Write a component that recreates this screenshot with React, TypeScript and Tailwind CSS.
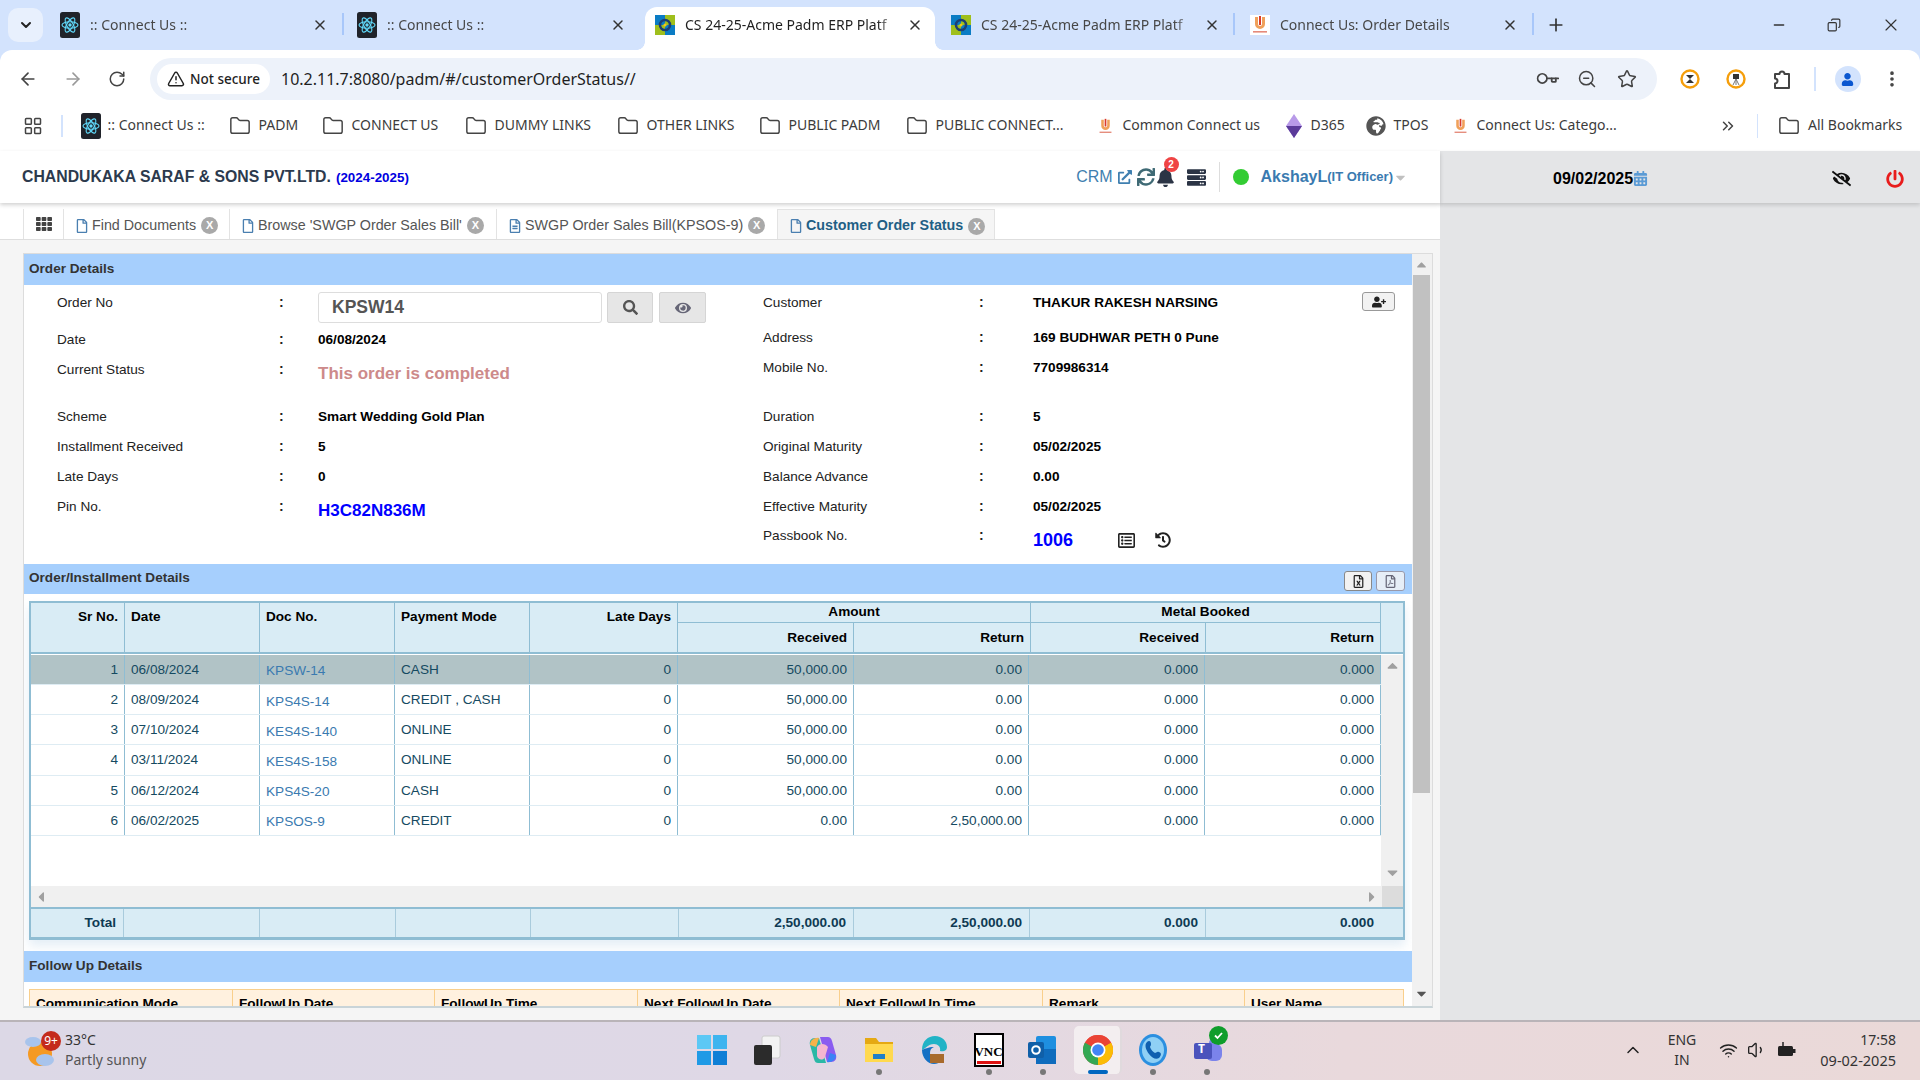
import React from "react";
import { ArrowLeft, ArrowRight, RotateCw, TriangleAlert, ZoomOut, Star, EllipsisVertical, Minus, Copy, X, Plus, ChevronDown, Folder, LayoutGrid, ChevronsRight, Key, ChevronUp, Wifi, Volume1 } from "lucide-react";
import { FaSearch, FaEye, FaUserPlus, FaHistory, FaRegFileExcel, FaRegFilePdf, FaExternalLinkAlt, FaSync, FaBell, FaServer, FaCalendarAlt, FaEyeSlash, FaPowerOff, FaTh, FaRegFile, FaRegFileAlt, FaCaretDown, FaRegListAlt, FaUser, FaGlobeAfrica } from "react-icons/fa";

function ReactIcon({ size = 20 }: { size?: number }) {
  return (
    <svg width={size} height={size * 1.3} viewBox="0 0 20 26" className="shrink-0">
      <rect width="20" height="26" rx="2.5" fill="#20232a" />
      <g fill="none" stroke="#61dafb" strokeWidth="1.1">
        <ellipse cx="10" cy="13" rx="8" ry="3.2" />
        <ellipse cx="10" cy="13" rx="8" ry="3.2" transform="rotate(60 10 13)" />
        <ellipse cx="10" cy="13" rx="8" ry="3.2" transform="rotate(120 10 13)" />
      </g>
      <circle cx="10" cy="13" r="1.7" fill="#61dafb" />
    </svg>
  );
}
function AcmeIcon() {
  return (
    <svg width="20" height="20" viewBox="0 0 20 20" className="shrink-0">
      <rect width="10" height="10" fill="#0a7cc4" />
      <rect x="10" width="10" height="10" fill="#9fbf1c" />
      <rect y="10" width="10" height="10" fill="#9fbf1c" />
      <rect x="10" y="10" width="10" height="10" fill="#0a7cc4" />
      <circle cx="10" cy="10" r="5" fill="none" stroke="#1d3f73" strokeWidth="2.6" />
      <circle cx="10" cy="10" r="1.6" fill="#f5c518" />
    </svg>
  );
}
function CuIcon({ size = 20 }: { size?: number }) {
  return (
    <svg width={size} height={size} viewBox="0 0 20 20" className="shrink-0">
      <rect width="20" height="20" fill="#fff" />
      <path d="M5 2v7a5 5 0 0 0 10 0V2h-3v7a2 2 0 0 1-4 0V2z" fill="#f0a05a" />
      <path d="M9 1h2v9H9z" fill="#d93a2b" />
      <rect x="3" y="16" width="14" height="1.6" fill="#e58a7a" />
    </svg>
  );
}

function ChromeTab({ box, icon, text, active, sep }: { box: string; icon: React.ReactNode; text: string; active?: boolean; sep?: boolean }) {
  return (
    <div className={`relative flex items-center h-[43px] pb-[7px] shrink-0 ${box} ${active ? "bg-white rounded-t-[12px] text-[#1f1f1f]" : "text-[#474747]"}`}>
      {active && (
        <>
          <span className="absolute bottom-0 left-[-8px] w-[8px] h-[8px] bg-[radial-gradient(circle_at_0_0,transparent_7.5px,white_8px)]" />
          <span className="absolute bottom-0 right-[-8px] w-[8px] h-[8px] bg-[radial-gradient(circle_at_100%_0,transparent_7.5px,white_8px)]" />
        </>
      )}
      {icon}
      <span className="flex-1 ml-[10px] mr-[8px] whitespace-nowrap overflow-hidden text-[14px] leading-[20px] [mask-image:linear-gradient(90deg,black_90%,transparent)]">{text}</span>
      <X size={16} strokeWidth={2.2} className="shrink-0 text-[#333]" />
      {sep && <span className="absolute right-0 top-[6px] h-[22px] w-[2px] bg-[#a8c7fa]" />}
    </div>
  );
}

function Bm({ box, icon, text, gap }: { box: string; icon?: React.ReactNode; text: string; gap: string }) {
  return (
    <div className={`flex items-center shrink-0 ${box}`}>
      {icon ?? <Folder size={22} strokeWidth={1.6} className="text-[#444] shrink-0" />}
      <span className={`${gap} whitespace-nowrap text-[14px] leading-[20px] text-[#3c3c3c] pb-[2px]`}>{text}</span>
    </div>
  );
}

function ChromeBar() {
  return (
    <div className="bg-[#d3e3fd] font-['Noto_Sans',sans-serif]">
      <div className="flex items-end h-[50px] pl-[8px]">
        <div className="flex items-center justify-center w-[35px] h-[34px] mb-[8px] mr-[7px] rounded-[10px] bg-[#e8f0fd] shrink-0">
          <ChevronDown size={16} strokeWidth={3} className="text-[#222]" />
        </div>
        <ChromeTab box="w-[294px] pl-[10px] pr-[16px]" icon={<ReactIcon size={20} />} text=":: Connect Us ::" sep />
        <ChromeTab box="w-[296px] pl-[13px] pr-[14px]" icon={<ReactIcon size={20} />} text=":: Connect Us ::" />
        <ChromeTab box="w-[290px] ml-[5px] pl-[10px] pr-[12px]" icon={<AcmeIcon />} text="CS 24-25-Acme Padm ERP Platf" active />
        <ChromeTab box="w-[295px] ml-[5px] pl-[11px] pr-[15px]" icon={<AcmeIcon />} text="CS 24-25-Acme Padm ERP Platf" sep />
        <ChromeTab box="w-[299px] pl-[15px] pr-[16px]" icon={<CuIcon />} text="Connect Us: Order Details" sep />
        <div className="flex items-center justify-center w-[44px] h-[43px] pb-[7px] shrink-0">
          <Plus size={20} strokeWidth={2} className="text-[#333]" />
        </div>
        <div className="flex-1" />
        <div className="flex items-center justify-center w-[55px] h-[50px] shrink-0"><Minus size={16} className="text-[#333]" /></div>
        <div className="flex items-center justify-center w-[56px] h-[50px] shrink-0"><Copy size={14} className="text-[#333] -scale-x-100" /></div>
        <div className="flex items-center justify-center w-[58px] h-[50px] shrink-0"><X size={20} strokeWidth={1.4} className="text-[#333]" /></div>
      </div>
      <div className="bg-white rounded-t-[12px]">
        <div className="flex items-start h-[58px] pt-[8px]">
          <div className="flex items-center h-[42px] w-[150px] shrink-0 pl-[18px] gap-[25px]">
            <ArrowLeft size={20} className="text-[#444] shrink-0" />
            <ArrowRight size={20} className="text-[#9a9a9a] shrink-0" />
            <RotateCw size={18} className="text-[#444] shrink-0" />
          </div>
          <div className="flex items-center w-[1507px] h-[42px] rounded-full bg-[#edf2fa] pl-[7px] pr-[20px] shrink-0">
            <div className="flex items-center justify-center gap-[5px] w-[113px] h-[30px] rounded-full bg-white shrink-0">
              <TriangleAlert size={18} className="text-[#222]" />
              <span className="text-[13.5px] font-medium text-[#1f1f1f] whitespace-nowrap">Not secure</span>
            </div>
            <span className="ml-[11px] text-[16px] text-[#1f1f1f] whitespace-nowrap flex-1">10.2.11.7:8080/padm/#/customerOrderStatus//</span>
            <Key size={20} strokeWidth={2.2} className="text-[#444] rotate-45 shrink-0" />
            <ZoomOut size={20} strokeWidth={1.8} className="text-[#444] ml-[20px] shrink-0" />
            <Star size={20} strokeWidth={1.8} className="text-[#444] ml-[20px] shrink-0" />
          </div>
          <div className="flex items-center h-[42px] pl-[23px]">
            <svg width="20" height="20" viewBox="0 0 20 20" className="shrink-0"><circle cx="10" cy="10" r="8.5" fill="#fff" stroke="#f59e0b" strokeWidth="2.4" /><path d="M6 6h8L6 14h8z" fill="#333" /></svg>
            <svg width="20" height="20" viewBox="0 0 20 20" className="ml-[26px] shrink-0"><circle cx="10" cy="10" r="8.5" fill="#fff" stroke="#f59e0b" strokeWidth="2.4" /><rect x="7" y="5" width="6" height="5" fill="#333" /><path d="M10 10v6M10 10l-3 6M10 10l3 6" stroke="#777" /></svg>
            <svg width="22" height="22" viewBox="0 0 22 22" className="ml-[25px] shrink-0"><path d="M4 6h4.5a2.5 2.5 0 0 1 5 0H18v14H4v-4.5a2.5 2.5 0 0 0 0-5z" fill="none" stroke="#444" strokeWidth="2" strokeLinejoin="round" /></svg>
            <span className="ml-[21px] w-[1.5px] h-[24px] bg-[#d3e3fd] shrink-0" />
            <div className="ml-[19px] flex items-center justify-center w-[26px] h-[26px] rounded-full bg-[#d3e3fd] shrink-0">
              <FaUser size={13} className="text-[#0b57d0]" />
            </div>
            <EllipsisVertical size={20} strokeWidth={2.4} className="ml-[21px] text-[#444] shrink-0" />
          </div>
        </div>
        <div className="flex items-center h-[36px] pl-[23px]">
          <LayoutGrid size={20} strokeWidth={1.8} className="text-[#444] shrink-0" />
          <span className="ml-[18px] mr-[18px] w-[1.5px] h-[22px] bg-[#d3e3fd] shrink-0" />
          <Bm box="w-[148px]" icon={<ReactIcon size={20} />} text=":: Connect Us ::" gap="ml-[7px]" />
          <Bm box="w-[93px]" text="PADM" gap="ml-[8px]" />
          <Bm box="w-[143px]" text="CONNECT US" gap="ml-[8px]" />
          <Bm box="w-[152px]" text="DUMMY LINKS" gap="ml-[8px]" />
          <Bm box="w-[142px]" text="OTHER LINKS" gap="ml-[8px]" />
          <Bm box="w-[147px]" text="PUBLIC PADM" gap="ml-[8px]" />
          <Bm box="w-[191px]" text="PUBLIC CONNECT..." gap="ml-[8px]" />
          <Bm box="w-[188px]" icon={<CuIcon size={17} />} text="Common Connect us" gap="ml-[9px]" />
          <Bm box="w-[81px]" icon={<svg width="18" height="26" viewBox="0 0 18 26" className="shrink-0"><path d="M9 1l8 12-8 12L1 13z" fill="#b89ae8" /><path d="M9 13l8 0-8 12L1 13z" fill="#5b3b9a" /></svg>} text="D365" gap="ml-[8px]" />
          <Bm box="w-[86px]" icon={<FaGlobeAfrica size={20} className="text-[#555] shrink-0" />} text="TPOS" gap="ml-[8px]" />
          <Bm box="w-[267px]" icon={<CuIcon size={17} />} text="Connect Us: Catego..." gap="ml-[8px]" />
          <ChevronsRight size={18} strokeWidth={2} className="text-[#444] shrink-0" />
          <span className="ml-[20px] mr-[20px] w-[1.5px] h-[24px] bg-[#d3e3fd] shrink-0" />
          <Bm box="" text="All Bookmarks" gap="ml-[8px]" />
        </div>
        <div className="h-[7px]" />
      </div>
    </div>
  );
}

function AppTab({ box, text, active, filled }: { box: string; text: string; active?: boolean; filled?: boolean }) {
  return (
    <div className={`flex items-center h-[30px] pl-[11px] pt-[3px] border-l border-[#e3e3e3] shrink-0 ${box} ${active ? "bg-[#f5f5f5] border-r border-t" : ""}`}>
      {filled ? <FaRegFileAlt size={14} className="text-[#4a7fb0] shrink-0" /> : <FaRegFile size={14} className="text-[#4a7fb0] shrink-0" />}
      <span className={`ml-[3px] whitespace-nowrap text-[14.3px] ${active ? "font-bold text-[#1f5f85]" : "text-[#555]"}`}>{text}</span>
      <span className="ml-[5px] flex items-center justify-center w-[17px] h-[17px] rounded-full bg-[#a9a9a9] text-white text-[11px] font-bold shrink-0">
        X
      </span>
    </div>
  );
}

function Section({ title, children }: { title: string; children?: React.ReactNode }) {
  return (
    <div className="flex items-center justify-between h-[31px] bg-[#a6cffd] pl-[5px] pr-[7px] shrink-0">
      <span className="font-bold text-[13.6px] text-[#333]">{title}</span>
      {children}
    </div>
  );
}

function Field({ h, label, colonX, colonW, value }: { h: string; label: string; colonX: string; colonW: string; value: React.ReactNode }) {
  return (
    <div className={`flex items-start ${h}`}>
      <span className={`text-[13.6px] leading-[20px] text-[#222] whitespace-nowrap ${colonX}`}>{label}</span>
      <span className={`font-bold text-[14px] leading-[18px] text-[#222] shrink-0 ${colonW}`}>:</span>
      {value}
    </div>
  );
}
const V = ({ children }: { children: React.ReactNode }) => (
  <span className="block font-bold text-[13.6px] leading-[20px] text-black whitespace-nowrap">{children}</span>
);

const rows = [
  ["1", "06/08/2024", "KPSW-14", "CASH", "0", "50,000.00", "0.00", "0.000", "0.000"],
  ["2", "08/09/2024", "KPS4S-14", "CREDIT , CASH", "0", "50,000.00", "0.00", "0.000", "0.000"],
  ["3", "07/10/2024", "KES4S-140", "ONLINE", "0", "50,000.00", "0.00", "0.000", "0.000"],
  ["4", "03/11/2024", "KES4S-158", "ONLINE", "0", "50,000.00", "0.00", "0.000", "0.000"],
  ["5", "06/12/2024", "KPS4S-20", "CASH", "0", "50,000.00", "0.00", "0.000", "0.000"],
  ["6", "06/02/2025", "KPSOS-9", "CREDIT", "0", "0.00", "2,50,000.00", "0.000", "0.000"],
];
const HCell = "flex px-[6px] pt-[4px] font-bold text-[13.6px] text-black border-r border-[#8fbdd3] shrink-0 h-full";
const HSub = "flex items-center justify-end pr-[6px] pt-[1px] font-bold text-[13.6px] text-black";

function InstallmentTable() {
  const cellWidths = ["w-[94px]", "w-[135px]", "w-[135px]", "w-[135px]", "w-[148px]", "w-[176px]", "w-[175px]", "w-[176px]", "w-[176px]"];
  return (
    <div className="ml-[5px] mt-[7px] w-[1376px] border-x-2 border-t-2 border-b-[3px] border-[#8fbdd3] shadow-[0_6px_10px_rgba(120,170,210,0.2)] box-border h-[339px] flex flex-col">
      <div className="flex h-[51px] bg-[#d9ecf5] border-b-2 border-[#8fbdd3] shrink-0">
        <div className={`${HCell} w-[94px] justify-end`}>Sr No.</div>
        <div className={`${HCell} w-[135px]`}>Date</div>
        <div className={`${HCell} w-[135px]`}>Doc No.</div>
        <div className={`${HCell} w-[135px]`}>Payment Mode</div>
        <div className={`${HCell} w-[148px] justify-end`}>Late Days</div>
        <div className="w-[353px] shrink-0 flex flex-col border-r border-[#8fbdd3]">
          <div className="h-[20px] flex items-center justify-center font-bold text-[13.6px] text-black border-b border-[#8fbdd3]">Amount</div>
          <div className="flex flex-1">
            <div className={`${HSub} w-[176px] border-r border-[#8fbdd3]`}>Received</div>
            <div className={`${HSub} flex-1`}>Return</div>
          </div>
        </div>
        <div className="w-[350px] shrink-0 flex flex-col border-r border-[#8fbdd3]">
          <div className="h-[20px] flex items-center justify-center font-bold text-[13.6px] text-black border-b border-[#8fbdd3]">Metal Booked</div>
          <div className="flex flex-1">
            <div className={`${HSub} w-[175px] border-r border-[#8fbdd3]`}>Received</div>
            <div className={`${HSub} flex-1`}>Return</div>
          </div>
        </div>
      </div>
      <div className="flex h-[232px] shrink-0 pt-[1px] bg-white">
        <div className="w-[1350px] shrink-0">
          {rows.map((r, i) => (
            <div key={r[0]} className={`flex h-[30.17px] border-b border-[#deecf3] ${i === 0 ? "bg-[#b1c3c6]" : "bg-white"}`}>
              {r.map((c, j) => (
                <div key={j} className={`${cellWidths[j]} shrink-0 flex items-center px-[6px] text-[13.6px] border-r border-[#8fbdd3] whitespace-nowrap ${j === 1 || j === 3 ? "justify-start pt-[1px]" : j === 2 ? "justify-start pt-[4px] text-[#3a7ab0]" : "justify-end pt-[1px]"} ${j === 2 ? "" : "text-[#154a61]"}`}>
                  {c}
                </div>
              ))}
            </div>
          ))}
        </div>
        <div className="flex-1 bg-[#f0f0f0] flex flex-col items-center justify-between pt-[3px] pb-[5px]">
          <FaCaretDown size={17} className="text-[#a0a0a0] rotate-180" />
          <FaCaretDown size={17} className="text-[#a0a0a0]" />
        </div>
      </div>
      <div className="flex h-[21px] bg-[#f0f0f0] shrink-0 items-center">
        <FaCaretDown size={16} className="text-[#a0a0a0] rotate-90 ml-[3px]" />
        <div className="flex-1" />
        <FaCaretDown size={16} className="text-[#a0a0a0] -rotate-90 mr-[3px]" />
        <div className="w-[21px] h-full bg-[#dcdcdc]" />
      </div>
      <div className="flex flex-1 bg-[#d9ecf5] border-t-2 border-[#8fbdd3] font-bold text-[13.6px] text-[#0e3a53]">
        {[["w-[93px]", "Total"], ["w-[136px]", ""], ["w-[136px]", ""], ["w-[135px]", ""], ["w-[148px]", ""], ["w-[175px]", "2,50,000.00"], ["w-[176px]", "2,50,000.00"], ["w-[176px]", "0.000"]].map(([w, t], i) => (
          <div key={i} className={`${w} shrink-0 flex items-center justify-end pr-[7px] border-r border-[#a9cbdc]`}>{t}</div>
        ))}
        <div className="flex-1 flex items-center justify-end pr-[29px]">0.000</div>
      </div>
    </div>
  );
}

function Main() {
  const f = "w-[222px] shrink-0";
  const g = "w-[216px] shrink-0";
  const cl = "w-[39px]";
  const cr = "w-[54px]";
  return (
    <div className="flex flex-col w-[1388px] overflow-hidden">
      <Section title="Order Details" />
      <div className="flex h-[279px] bg-white shrink-0">
        <div className="w-[706px] shrink-0 pt-[8px] pl-[33px]">
          <Field h="h-[37px]" label="Order No" colonX={f} colonW={cl} value={
            <div className="flex -mt-[1px]">
              <div className="flex items-center w-[284px] h-[31px] border border-[#ddd] rounded-[3px] bg-white pl-[13px] font-bold text-[17.5px] text-[#555]">KPSW14</div>
              <div className="ml-[5px] flex items-center justify-center w-[46px] h-[31px] bg-[#e6e6e6] border border-[#d5d5d5] rounded-[2px]"><FaSearch size={15} className="text-[#555]" /></div>
              <div className="ml-[6px] flex items-center justify-center w-[47px] h-[31px] bg-[#e6e6e6] border border-[#d5d5d5] rounded-[2px]"><FaEye size={16} className="text-[#667]" /></div>
            </div>} />
          <Field h="h-[30px]" label="Date" colonX={f} colonW={cl} value={<V>06/08/2024</V>} />
          <Field h="h-[47px]" label="Current Status" colonX={f} colonW={cl} value={<span className="pt-[1px] font-bold text-[17px] leading-[26px] text-[#cd8a8a] whitespace-nowrap">This order is completed</span>} />
          <Field h="h-[30px]" label="Scheme" colonX={f} colonW={cl} value={<V>Smart Wedding Gold Plan</V>} />
          <Field h="h-[30px]" label="Installment Received" colonX={f} colonW={cl} value={<V>5</V>} />
          <Field h="h-[30px]" label="Late Days" colonX={f} colonW={cl} value={<V>0</V>} />
          <Field h="h-[30px]" label="Pin No." colonX={f} colonW={cl} value={<span className="pt-[1px] font-bold text-[17px] leading-[26px] text-[#0000ff] whitespace-nowrap">H3C82N836M</span>} />
        </div>
        <div className="relative flex-1 pt-[8px] pl-[33px]">
          <div className="absolute right-[17px] top-[7px] flex items-center justify-center w-[33px] h-[19px] bg-[#f2f2f2] border border-[#999] rounded-[3px]">
            <FaUserPlus size={14} className="text-[#222]" />
          </div>
          <Field h="h-[35px]" label="Customer" colonX={g} colonW={cr} value={<V>THAKUR RAKESH NARSING</V>} />
          <Field h="h-[30px]" label="Address" colonX={g} colonW={cr} value={<V>169 BUDHWAR PETH 0 Pune</V>} />
          <Field h="h-[49px]" label="Mobile No." colonX={g} colonW={cr} value={<V>7709986314</V>} />
          <Field h="h-[30px]" label="Duration" colonX={g} colonW={cr} value={<V>5</V>} />
          <Field h="h-[30px]" label="Original Maturity" colonX={g} colonW={cr} value={<V>05/02/2025</V>} />
          <Field h="h-[30px]" label="Balance Advance" colonX={g} colonW={cr} value={<V>0.00</V>} />
          <Field h="h-[29px]" label="Effective Maturity" colonX={g} colonW={cr} value={<V>05/02/2025</V>} />
          <Field h="h-[30px]" label="Passbook No." colonX={g} colonW={cr} value={
            <div className="flex items-center">
              <span className="font-bold text-[18px] leading-[28px] text-[#0000ff] w-[85px]">1006</span>
              <FaRegListAlt size={17} className="text-[#222]" />
              <FaHistory size={16} className="text-[#222] ml-[20px]" />
            </div>} />
        </div>
      </div>
      <div className="flex items-center justify-between h-[30px] bg-[#a6cffd] pl-[5px] pr-[7px] shrink-0">
        <span className="font-bold text-[13.6px] text-[#333] pb-[2px]">Order/Installment Details</span>
        <div className="flex gap-[4px] mt-[4px]">
          <div className="flex items-center justify-center w-[28px] h-[20px] bg-[#f2f2f2] border border-[#888] rounded-[3px]"><FaRegFileExcel size={13} className="text-[#222]" /></div>
          <div className="flex items-center justify-center w-[29px] h-[20px] bg-[#e6eef7] border border-[#99a] rounded-[3px]"><FaRegFilePdf size={13} className="text-[#667]" /></div>
        </div>
      </div>
      <div className="bg-white h-[357px] shrink-0">
        <InstallmentTable />
      </div>
      <Section title="Follow Up Details" />
      <div className="bg-white flex-1 pt-[7px] pl-[5px] overflow-hidden">
        <div className="flex w-[1375px] h-[30px] bg-[#fff1df] border-t border-x border-[#f9cf8c] font-bold text-[13.6px] text-black">
          {[["w-[203px]", "Communication Mode"], ["w-[202px]", "FollowUp Date"], ["w-[203px]", "FollowUp Time"], ["w-[202px]", "Next FollowUp Date"], ["w-[203px]", "Next FollowUp Time"], ["w-[202px]", "Remark"]].map(([w, t]) => (
            <div key={t} className={`${w} shrink-0 pl-[6px] pt-[4px] border-r border-[#f9cf8c] whitespace-nowrap`}>{t}</div>
          ))}
          <div className="flex-1 pl-[6px] pt-[4px]">User Name</div>
        </div>
      </div>
    </div>
  );
}

function Taskbar() {
  const Dot = () => <span className="absolute bottom-[5px] left-1/2 -ml-[3px] w-[6px] h-[6px] rounded-full bg-[#777]" />;
  const Slot = ({ children, w, dot }: { children: React.ReactNode; w: string; dot?: boolean }) => (
    <div className={`relative flex items-center justify-center h-[58px] pb-[2px] shrink-0 ${w}`}>
      {children}
      {dot && <Dot />}
    </div>
  );
  return (
    <div className="flex items-center h-[60px] border-t-2 border-[#b9b4b8] bg-[linear-gradient(90deg,#dcd8e6_0%,#dfd8e6_40%,#e9d9dc_70%,#ead9d8_100%)] font-['Noto_Sans',sans-serif] text-[#333]">
      <div className="w-[684px] flex items-center shrink-0 pl-[25px] pb-[2px]">
        <div className="relative w-[32px] h-[40px] shrink-0">
          <svg width="32" height="40" viewBox="0 0 32 40"><circle cx="15" cy="24" r="12" fill="#f59a23" /><ellipse cx="20" cy="30" rx="9" ry="6" fill="#a8c4ec" /><ellipse cx="8" cy="12" rx="8" ry="5" fill="#a8c4ec" /></svg>
          <span className="absolute right-[-4px] top-[1px] flex items-center justify-center w-[20px] h-[20px] rounded-full bg-[#c42b1c] text-white text-[12px]">9+</span>
        </div>
        <div className="ml-[8px] flex flex-col leading-[20px] text-[14px]">
          <span>33°C</span>
          <span className="text-[#555]">Partly sunny</span>
        </div>
      </div>
      <Slot w="w-[55px]">
        <svg width="30" height="30" viewBox="0 0 30 30"><rect width="14" height="14" fill="#5cc8f5" /><rect x="16" width="14" height="14" fill="#3db4ef" /><rect y="16" width="14" height="14" fill="#1f9ae6" /><rect x="16" y="16" width="14" height="14" fill="#0f7fd6" /></svg>
      </Slot>
      <Slot w="w-[56px]">
        <svg width="30" height="30" viewBox="0 0 30 30"><rect x="10" y="1" width="18" height="22" rx="2" fill="#f3f3f3" stroke="#ccc" /><rect x="2" y="10" width="18" height="20" rx="2" fill="#2b2b2b" /></svg>
      </Slot>
      <Slot w="w-[56px]">
        <svg width="30" height="30" viewBox="0 0 30 30"><path d="M12 2h8c2 0 3 1 4 4l4 14c1 4-1 7-5 7h-4z" fill="#8a5cf0" /><path d="M18 28h-8c-2 0-3-1-4-4L2 10C1 6 3 3 7 3h4z" fill="#2bb8a6" /><path d="M9 12c2-4 8-4 11 0l-3 10c-2 4-7 3-8-1z" fill="#f5b6d0" /><path d="M2 10c0-5 5-8 9-7l-3 9z" fill="#f6b24a" /><path d="M28 20c0 5-5 8-9 7l3-9z" fill="#3b82f6" /></svg>
      </Slot>
      <Slot w="w-[55px]" dot>
        <svg width="30" height="30" viewBox="0 0 30 30"><path d="M1 3h11l3 4h14v20H1z" fill="#e5a913" /><rect x="1" y="9" width="28" height="18" fill="#ffd94f" /><rect x="9" y="19" width="12" height="5" fill="#1e7fc9" /></svg>
      </Slot>
      <Slot w="w-[55px]">
        <svg width="30" height="30" viewBox="0 0 30 30"><path d="M3 15C3 6 9 1 16 1c7 0 12 5 12 11 0 4-4 5-7 4 1-4-2-7-6-7-6 0-9 5-12 6z" fill="#21b3c6" /><path d="M3 15c0 8 6 14 12 14 3 0 5-1 7-3-6 1-11-2-11-8 0-3 1-5 4-6-6 0-9 2-12 3z" fill="#1570c4" /><rect x="11" y="19" width="14" height="9" fill="#a86a2c" /></svg>
      </Slot>
      <Slot w="w-[55px]" dot>
        <div className="flex flex-col items-center justify-center w-[30px] h-[34px] bg-white border-2 border-black overflow-hidden">
          <span className="font-['Liberation_Serif',serif] font-bold text-[13px] leading-[16px] text-black mt-[8px]">VNC</span>
          <span className="w-[24px] h-[3px] bg-[#d11] mt-[1px]" />
        </div>
      </Slot>
      <Slot w="w-[54px]" dot>
        <svg width="30" height="32" viewBox="0 0 30 32"><rect x="8" y="2" width="20" height="28" rx="2" fill="#1e8fe0" /><rect x="8" y="15" width="20" height="15" fill="#0f6cbd" /><rect x="0" y="8" width="16" height="16" rx="2" fill="#0f5fa8" /><circle cx="8" cy="16" r="3.8" fill="none" stroke="#fff" strokeWidth="2" /></svg>
      </Slot>
      <div className="relative flex items-center justify-center w-[55px] h-[58px] pb-[2px] shrink-0">
        <div className="absolute left-[4px] top-[4px] w-[48px] h-[48px] rounded-[5px] bg-[#f3eef0] border-r-2 border-[#e0dadd]" />
        <svg width="30" height="30" viewBox="0 0 30 30" className="relative"><circle cx="15" cy="15" r="15" fill="#ea4335" /><path d="M15 15L2 7.5A15 15 0 0 0 15 30z" fill="#34a853" /><path d="M15 15l13-7.5A15 15 0 0 1 15 30z" fill="#fbbc05" /><path d="M15 15L2 7.5A15 15 0 0 1 28 7.5z" fill="#ea4335" /><circle cx="15" cy="15" r="7.5" fill="#fff" /><circle cx="15" cy="15" r="5.8" fill="#4285f4" /></svg>
        <span className="absolute bottom-[6px] left-1/2 -ml-[10px] w-[20px] h-[4px] rounded-full bg-[#0067c0]" />
      </div>
      <Slot w="w-[55px]" dot>
        <svg width="30" height="34" viewBox="0 0 30 34"><ellipse cx="15" cy="17" rx="14" ry="16" fill="#2b8fe0" /><ellipse cx="15" cy="17" rx="11" ry="13" fill="#8fd0f5" /><path d="M9 9c2-2 4-1 4 2 0 2-1 2-1 3 1 3 3 5 5 6 1 0 2-2 4-1 3 1 2 4 0 6-3 2-7 0-10-4S6 12 9 9z" fill="#0f5fb0" /></svg>
      </Slot>
      <Slot w="w-[53px]" dot>
        <div className="relative">
          <svg width="30" height="30" viewBox="0 0 30 30"><circle cx="22" cy="8" r="5" fill="#7b83eb" /><rect x="14" y="9" width="16" height="17" rx="6" fill="#7b83eb" /><rect x="2" y="8" width="18" height="16" rx="2" fill="#4b53bc" /></svg>
          <span className="absolute left-[3px] top-[6px] w-[14px] text-center text-white text-[12px] font-bold leading-[16px]">T</span>
          <span className="absolute right-[-6px] top-[-9px] flex items-center justify-center w-[19px] h-[19px] rounded-full bg-[#0f9d2b]">
            <svg width="11" height="11" viewBox="0 0 11 11"><path d="M2 5.5l2.5 2.5L9 3" stroke="#fff" strokeWidth="1.8" fill="none" /></svg>
          </span>
        </div>
      </Slot>
      <div className="flex-1" />
      <div className="flex items-center pb-[2px]">
        <ChevronUp size={20} strokeWidth={1.8} className="shrink-0 text-[#222] mr-[19px]" />
        <div className="flex flex-col items-center leading-[20px] text-[14px] w-[40px] shrink-0 mr-[17px]">
          <span>ENG</span>
          <span>IN</span>
        </div>
        <Wifi size={19} strokeWidth={1.8} className="shrink-0 text-[#222] mr-[9px]" />
        <Volume1 size={20} strokeWidth={1.6} className="shrink-0 text-[#222] mr-[10px]" />
        <svg width="20" height="18" viewBox="0 0 20 18" className="shrink-0 mr-[19px]"><rect x="1" y="5" width="15" height="10" rx="1.5" fill="#222" /><rect x="16" y="8" width="2.5" height="4" fill="#222" /><path d="M6 1v5" stroke="#222" strokeWidth="1.5" /></svg>
        <div className="flex flex-col items-end leading-[20px] text-[14px] w-[80px] shrink-0 mr-[24px]">
          <span>17:58</span>
          <span className="text-[14.5px] whitespace-nowrap">09-02-2025</span>
        </div>
      </div>
    </div>
  );
}

export default function App() {
  return (
    <div className="w-[1920px] h-[1080px] overflow-hidden flex flex-col font-['Liberation_Sans',Arial,sans-serif]">
      <ChromeBar />
      <div className="flex h-[869px] shrink-0">
        <div className="w-[1440px] shrink-0 flex flex-col bg-[#f5f5f5]">
          <div className="flex items-center justify-between h-[52px] bg-white pl-[22px] shadow-[0_2px_4px_rgba(0,0,0,0.18)] relative shrink-0">
            <div className="flex items-baseline whitespace-nowrap">
              <span className="font-bold text-[15.8px] text-[#2c3a4d]">CHANDUKAKA SARAF &amp; SONS PVT.LTD.</span>
              <span className="ml-[5px] font-bold text-[13.4px] text-[#0000e0]">(2024-2025)</span>
            </div>
            <div className="flex items-center h-full">
              <span className="text-[16px] text-[#3f7fb0]">CRM</span>
              <FaExternalLinkAlt size={14} className="ml-[5px] text-[#3f7fb0]" />
              <FaSync size={18} className="ml-[5px] text-[#3f6a75]" />
              <div className="relative ml-[1px]">
                <FaBell size={19} className="text-[#2b3445]" />
                <span className="absolute -top-[11px] right-[-4px] flex items-center justify-center w-[15px] h-[15px] rounded-full bg-[#ef4444] text-white text-[10px] font-bold">2</span>
              </div>
              <FaServer size={19} className="ml-[12px] text-[#2b3445]" />
              <span className="ml-[13px] h-[30px] w-px bg-[#ddd]" />
              <span className="ml-[13px] w-[16px] h-[16px] rounded-full bg-[#33cc33]" />
              <span className="ml-[12px] font-bold text-[16px] text-[#3a7ab0]">AkshayL</span>
              <span className="font-bold text-[13px] text-[#3a7ab0]">(IT Officer)</span>
              <FaCaretDown size={15} className="text-[#c0c0c0] mr-[32px]" />
            </div>
          </div>
          <div className="flex items-end h-[37px] bg-white border-b border-[#dedede] pl-[23px] shrink-0">
            <div className="flex items-center justify-center w-[40px] h-[30px] border-l border-[#e3e3e3] shrink-0">
              <FaTh size={16} className="text-[#444]" />
            </div>
            <AppTab box="w-[166px]" text="Find Documents" />
            <AppTab box="w-[267px]" text="Browse 'SWGP Order Sales Bill'" />
            <AppTab box="w-[281px]" text="SWGP Order Sales Bill(KPSOS-9)" filled />
            <AppTab box="w-[218px]" text="Customer Order Status" active />
          </div>
          <div className="flex-1 pl-[23px] pt-[13px] pb-[12px] min-h-0">
            <div className="flex w-[1410px] h-full border border-[#dcdcdc] border-b-2 border-b-[#c9d4d8] bg-white">
              <Main />
              <div className="flex-1 bg-[#f1f1f1] flex flex-col items-center pr-[1px]">
                <FaCaretDown size={15} className="text-[#a0a0a0] rotate-180 mt-[4px] shrink-0" />
                <div className="w-[17px] h-[518px] mt-[2px] bg-[#c1c1c1] shrink-0" />
                <div className="flex-1" />
                <FaCaretDown size={15} className="text-[#555] mb-[5px] shrink-0" />
              </div>
            </div>
          </div>
        </div>
        <div className="w-[480px] shrink-0 bg-[#e4e5e7]">
          <div className="flex items-center h-[52px] shadow-[0_2px_4px_rgba(0,0,0,0.15)] pl-[113px] pt-[3px]">
            <span className="font-bold text-[16px] text-black">09/02/2025</span>
            <FaCalendarAlt size={15} className="text-[#5b9bd5]" />
            <FaEyeSlash size={19} className="ml-[184px] text-[#111]" />
            <FaPowerOff size={18} className="ml-[35px] text-[#e81c1c]" />
          </div>
        </div>
      </div>
      <Taskbar />
    </div>
  );
}
